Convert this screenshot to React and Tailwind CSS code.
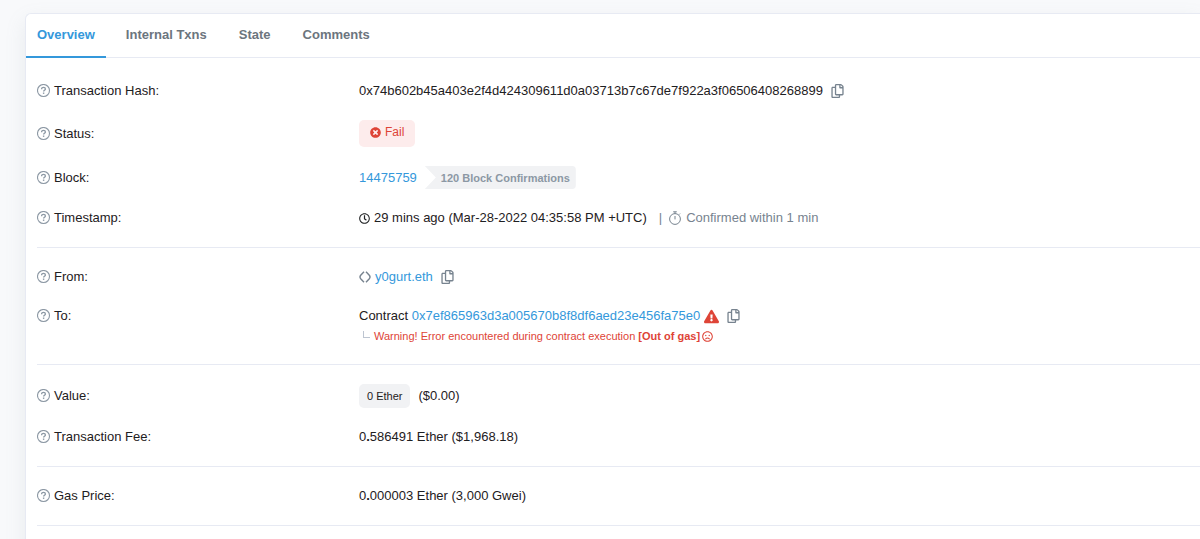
import React from 'react';
import { FaExclamationTriangle, FaRegClock, FaRegCopy, FaRegFrown, FaTimesCircle } from 'react-icons/fa';

const tabs = ['Overview', 'Internal Txns', 'State', 'Comments'];

function HelpIcon() {
  return (
    <svg viewBox="0 0 14 14" className="h-3.5 w-3.5 shrink-0 text-[#8c98a4]" fill="none" stroke="currentColor">
      <circle cx="6.5" cy="6.500" r="6" strokeWidth="1.1" />
      <path d="M4.600 5.200c0-1.200.9-1.800 1.900-1.800s1.900.6 1.900 1.600c0 1.300-1.800 1.200-1.800 2.500" strokeWidth="1.3" />
      <path d="M6.600 8.500v1.400" strokeWidth="1.4" />
    </svg>
  );
}

function StopwatchIcon() {
  return (
    <svg viewBox="0 0 14 14" className="h-3.5 w-3.5 shrink-0" fill="none" stroke="currentColor" strokeWidth="1">
      <circle cx="7" cy="8" r="5.4" />
      <path d="M5.200.8h3.600M7 .8v2M7 5v3.400M11 3.600l1-1" />
    </svg>
  );
}

function EnsIcon() {
  return (
    <svg viewBox="0 0 12 14" className="h-3.5 w-3 shrink-0 text-[#77838f]" fill="none" stroke="currentColor" strokeWidth="1.4">
      <path d="M5 1.800 1.700 5.300c-1 1.200-1 2.200 0 3.400L5 12.200" />
      <path d="M7 1.800 10.300 5.300c1 1.200 1 2.200 0 3.400L7 12.200" />
    </svg>
  );
}

function CopyButton({ label }) {
  return (
    <button type="button" aria-label={label} className="ml-2 shrink-0 text-[#77838f]">
      <FaRegCopy className="h-3.5 w-[13px]" />
    </button>
  );
}

function Row({ label, children }) {
  return (
    <div className="flex">
      <dt className="flex w-[322px] shrink-0 items-center gap-[3px]">
        <HelpIcon />
        {label}:
      </dt>
      <dd className="flex min-w-0 grow items-center whitespace-nowrap">{children}</dd>
    </div>
  );
}

function Group({ children }) {
  return <dl className="flex flex-col gap-[19px] border-b border-[#e7eaf3] py-[19px]">{children}</dl>;
}

export default function App() {
  return (
    <div className="min-h-screen overflow-hidden bg-[#f8f9fb] pt-[13px] pl-[25px] font-['Liberation_Sans',Arial,sans-serif] text-[13px] leading-5 text-[#1e2022]">
      <main className="min-h-screen rounded-tl-md border-t border-l border-[#e7eaf3] bg-white shadow-[0_8px_20px_rgba(140,152,164,0.15)]">
        <nav className="flex border-b border-[#e7eaf3] font-bold">
          {tabs.map((tab, index) => (
            <button
              key={tab}
              type="button"
              className={
                index === 0
                  ? '-mb-px mr-1 border-b-2 border-[#3498db] px-[11px] pt-[11px] pb-[11px] text-[#3498db]'
                  : '-mb-px border-b-2 border-transparent px-4 pt-[11px] pb-[11px] text-[#6c757e]'
              }
            >
              {tab}
            </button>
          ))}
        </nav>

        <div className="pt-1 pl-[11px]">
          <Group>
            <Row label="Transaction Hash">
              0x74b602b45a403e2f4d424309611d0a03713b7c67de7f922a3f06506408268899
              <CopyButton label="Copy transaction hash" />
            </Row>
            <Row label="Status">
              <span className="flex h-[27px] items-center gap-1 rounded-[5px] bg-[#fdecec] px-[11px] pb-[3px] text-xs text-[#de4437]">
                <FaTimesCircle className="h-[11px] w-[11px]" />
                Fail
              </span>
            </Row>
            <Row label="Block">
              <a href="#block" className="text-[#3498db]">14475759</a>
              <span className="ml-2 flex h-[23px] items-center rounded-r bg-[#f1f2f4] pr-1.5 pl-4 text-[11px] font-bold text-[#8c98a4] [clip-path:polygon(0_0,100%_0,100%_100%,0_100%,11px_50%)]">
                120 Block Confirmations
              </span>
            </Row>
            <Row label="Timestamp">
              <FaRegClock className="mr-1 h-[11px] w-[11px]" />
              29 mins ago (Mar-28-2022 04:35:58 PM +UTC)
              <span className="ml-3 flex items-center gap-1 text-[#77838f]">
                <span className="mr-0.5">|</span>
                <StopwatchIcon />
                Confirmed within 1 min
              </span>
            </Row>
          </Group>

          <Group>
            <Row label="From">
              <EnsIcon />
              <a href="#from" className="ml-1 text-[#3498db]">y0gurt.eth</a>
              <CopyButton label="Copy sender address" />
            </Row>
            <div>
              <Row label="To">
                Contract&nbsp;
                <a href="#to" className="text-[#3498db]">0x7ef865963d3a005670b8f8df6aed23e456fa75e0</a>
                <FaExclamationTriangle className="ml-1 h-[15px] w-[15px] text-[#de4437]" />
                <CopyButton label="Copy contract address" />
              </Row>
              <p className="mt-0.5 ml-[322px] flex items-center pl-1 text-[11px] leading-[17px] whitespace-nowrap text-[#de4437]">
                <span className="mr-1 mb-1 h-[7px] w-[7px] border-b border-l border-[#bdc5d1]" />
                Warning! Error encountered during contract execution&nbsp;<b>[Out of gas]</b>
                <FaRegFrown className="ml-0.5 h-[11px] w-[11px]" />
              </p>
            </div>
          </Group>

          <Group>
            <Row label="Value">
              <span className="flex h-6 items-center rounded-[5px] bg-[#f1f2f4] px-2 text-[11px]">0 Ether</span>
              <span className="ml-2">($0.00)</span>
            </Row>
            <Row label="Transaction Fee">
              0<b>.</b>586491 Ether ($1,968.18)
            </Row>
          </Group>

          <Group>
            <Row label="Gas Price">
              0<b>.</b>000003 Ether (3,000 Gwei)
            </Row>
          </Group>
        </div>
      </main>
    </div>
  );
}
